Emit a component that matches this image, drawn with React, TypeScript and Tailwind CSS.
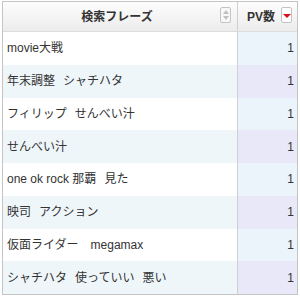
import React from "react";

const rows = [
  "movie大戦",
  "年末調整|シャチハタ",
  "フィリップ|せんべい汁",
  "せんべい汁",
  "one ok rock 那覇|見た",
  "映司|アクション",
  "仮面ライダー||megamax",
  "シャチハタ|使っていい|悪い",
];

function Phrase({ text }: { text: string }) {
  const parts = text.split("|");
  return (
    <span className="whitespace-pre">
      {parts.map((p, i) =>
        p === "" ? (
          <span key={i} className="inline-block w-[4px]" />
        ) : (
          <React.Fragment key={i}>
            {i > 0 && <span className="inline-block w-[8px]" />}
            {p}
          </React.Fragment>
        )
      )}
    </span>
  );
}

export default function App() {
  return (
    <div
      className="w-[300px] h-[296px] bg-white pt-[1px] pl-[2px]"
      style={{ fontFamily: '"Liberation Sans", "Noto Sans CJK JP", sans-serif' }}
    >
      <div className="w-[296px] border border-[#c4c4c4] text-[12px] text-[#333]">
        <div className="flex h-[30px] bg-gradient-to-b from-[#fdfdfd] to-[#ececec] border-b border-[#dcdcdc]">
          <div className="relative flex items-center justify-center w-[235px] border-r border-[#cfcfcf] font-bold">
            <span className="pr-[6px]">検索フレーズ</span>
            <div className="absolute left-[217px] top-[5px] w-[11px] h-[16px] rounded-[2px] border border-[#c4c4c4] bg-[#f8f8f8] flex flex-col items-center justify-center gap-[2px]">
              <div className="w-0 h-0 border-l-[3px] border-r-[3px] border-b-[4px] border-l-transparent border-r-transparent border-b-[#c0c0c0]" />
              <div className="w-0 h-0 border-l-[3px] border-r-[3px] border-t-[4px] border-l-transparent border-r-transparent border-t-[#c0c0c0]" />
            </div>
          </div>
          <div className="relative flex-1 flex items-center font-bold pl-[9px]">
            <span>PV数</span>
            <div className="absolute right-[5px] top-[5px] w-[11px] h-[16px] rounded-[2px] border border-[#c4c4c4] bg-white flex items-end justify-center pb-[4px]">
              <div className="w-0 h-0 border-l-[4px] border-r-[4px] border-t-[4px] border-l-transparent border-r-transparent border-t-[#d8101a]" />
            </div>
          </div>
        </div>
        {rows.map((r, i) => {
          const even = i % 2 === 1;
          return (
            <div key={i} className="flex h-[32.75px]">
              <div
                className={`w-[235px] border-r border-[#cfcfcf] flex items-center pl-[4px] ${
                  even ? "bg-[#eef6fa]" : "bg-white"
                }`}
              >
                <Phrase text={r} />
              </div>
              <div
                className={`flex-1 flex items-center justify-end pr-[3px] ${
                  even ? "bg-[#e9e8f9]" : "bg-[#ebf4fb]"
                }`}
              >
                1
              </div>
            </div>
          );
        })}
      </div>
    </div>
  );
}
